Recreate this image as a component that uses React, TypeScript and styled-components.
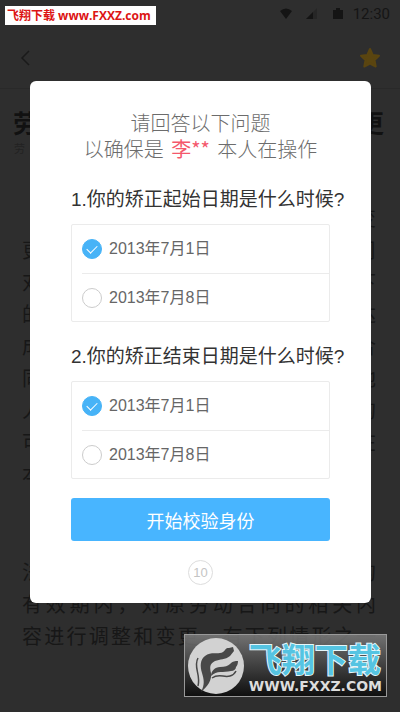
import React, { useState } from "react";
import styled, { createGlobalStyle } from "styled-components";

const cjk = `"Noto Sans CJK SC", sans-serif`;

const GlobalStyle = createGlobalStyle`
  *, *::before, *::after { box-sizing: border-box; }
  html, body, #root { height: 100%; }
  body {
    margin: 0;
    background: #2e2e2e;
    color: #171717;
    font-family: "Liberation Sans", ${cjk};
  }
`;

const Screen = styled.div`
  position: relative;
  min-height: 100%;
  overflow: hidden;
`;

const StatusBar = styled.header`
  display: flex;
  justify-content: flex-end;
  align-items: center;
  gap: 7px;
  height: 28px;
  padding-right: 10px;
  color: #141414;
`;

const Clock = styled.time`
  font: 400 15px/28px Roboto, sans-serif;
  color: #151515;
`;

const NavBar = styled.nav`
  display: flex;
  justify-content: space-between;
  align-items: center;
  height: 61px;
  padding: 0 18px;
  border-bottom: 1px solid #292929;
`;

const IconButton = styled.button`
  display: flex;
  padding: 0;
  border: 0;
  background: none;
`;

const Article = styled.article`
  padding: 15px 16px 0 22px;
`;

const Title = styled.h1`
  display: flex;
  justify-content: space-between;
  margin: 0 0 0 -9px;
  font: 700 25px/36px ${cjk};
  color: #111;
`;

const Meta = styled.p`
  margin: 0 0 46px -8px;
  font: 400 11px/16px ${cjk};
  color: #222;
`;

const Paragraph = styled.p`
  margin: 0 0 66px;
  padding-right: 8px;
  font: 400 20px/32px ${cjk};

  &:last-child {
    margin-bottom: 0;
  }
`;

const Justified = styled.span`
  display: block;
  text-align-last: justify;
  white-space: nowrap;
`;

const Ends = styled.span`
  display: flex;
  justify-content: space-between;
`;

const Overlay = styled.div`
  position: absolute;
  inset: 0;
  display: flex;
  align-items: flex-start;
  padding: 81px 29px 0 30px;
`;

const Dialog = styled.form`
  flex: 1;
  min-width: 0;
  display: flex;
  flex-direction: column;
  padding: 29px 41px 18px;
  border-radius: 6px;
  background: #fff;
`;

const Prompt = styled.h2`
  margin: 0 -16px 22px;
  font: 300 20px/26px ${cjk};
  color: #6c6c6c;
  text-align: center;
  white-space: nowrap;
`;

const Name = styled.strong`
  margin: 0 3px;
  font-weight: 400;
  color: #f4586c;
`;

const Question = styled.fieldset`
  min-width: 0;
  margin: 0 0 19px;
  padding: 0;
  border: 0;
`;

const Legend = styled.legend`
  width: 100%;
  padding: 0;
  margin-bottom: 8px;
  font-size: 19px;
  line-height: 32px;
  white-space: nowrap;
  color: #333;
`;

const Options = styled.div`
  padding-left: 10px;
  border: 1px solid #ebebeb;
  border-radius: 2px;
`;

const Option = styled.label`
  display: flex;
  align-items: center;
  gap: 7px;
  height: 48px;
  font-size: 16px;
  line-height: 20px;
  color: #666;

  & + & {
    border-top: 1px solid #ebebeb;
  }
`;

const Radio = styled.input`
  appearance: none;
  display: grid;
  justify-content: center;
  width: 20px;
  height: 20px;
  margin: 0;
  border: 1px solid #ccc;
  border-radius: 50%;

  &:checked {
    border-color: #47b3f7;
    background: #47b3f7;
  }

  &:checked::after {
    content: "";
    width: 10px;
    height: 6px;
    margin-top: 5px;
    border: solid #fff;
    border-width: 0 0 1px 1px;
    transform: rotate(-45deg);
  }
`;

const Submit = styled.button`
  height: 43px;
  padding: 0;
  border: 0;
  border-radius: 3px;
  background: #48b5ff;
  color: #fff;
  font: 400 18px/40px ${cjk};
`;

const Countdown = styled.output`
  align-self: center;
  width: 25px;
  height: 25px;
  margin-top: 19px;
  border: 1px solid #ddd;
  border-radius: 50%;
  color: #c4c4c4;
  font-size: 13px;
  line-height: 23px;
  text-align: center;
`;

const SiteTag = styled.a`
  position: absolute;
  left: 5px;
  top: 6px;
  padding: 0 5px 0 2px;
  background: #fff;
  color: #dc1414;
  font: 700 12px/19px "Open Sans", ${cjk};
  text-decoration: none;
  white-space: nowrap;
`;

const SiteBadge = styled.a`
  position: absolute;
  right: 13px;
  bottom: 15px;
  display: flex;
  align-items: center;
  gap: 4px;
  height: 63px;
  padding: 0 4px 0 2px;
  border: 1px solid #999;
  background: linear-gradient(rgba(125, 125, 125, 0.85), rgba(12, 12, 12, 0.9));
  text-decoration: none;
  white-space: nowrap;
`;

const BadgeText = styled.span`
  display: flex;
  flex-direction: column;
`;

const BadgeName = styled.span`
  font: 700 33px/40px ${cjk};
  color: #55c4e2;
  -webkit-text-stroke: 2px #e4f6fa;
  paint-order: stroke fill;
`;

const BadgeUrl = styled.span`
  font: 700 14px/16px "DejaVu Sans", sans-serif;
  color: #ddd;
`;

const bodyEnds = [
  ["", "变"],
  ["更", "司"],
  ["对", "下"],
  ["的", "达"],
  ["成", "合"],
  ["同", "他"],
  ["人", "的"],
  ["可", "在"],
  ["本", ""],
];

const rules = ["有效期内，对原劳动合同的相关内", "容进行调整和变更。有下列情形之一"];

const questions = [
  { id: "start", text: "1.你的矫正起始日期是什么时候?" },
  { id: "end", text: "2.你的矫正结束日期是什么时候?" },
];

const dates = ["2013年7月1日", "2013年7月8日"];

function StatusIcons() {
  return (
    <svg width="66" height="14" viewBox="0 0 66 14" fill="currentColor" aria-hidden="true">
      <path d="M0 4Q6-1 12 4L6 12Z" />
      <path d="M37 1V12H26Z" opacity=".3" />
      <path d="M33 5V12H26Z" />
      <path d="M53 3H56V1H60V3H63V12H53Z" />
    </svg>
  );
}

function BadgeLogo() {
  return (
    <svg width="58" height="58" viewBox="0 0 58 58" fill="#484848" aria-hidden="true">
      <circle cx="29" cy="29" r="28" fill="#d2d2d2" />
      <path d="M14 55C18 47 17 43 15 36C13 29 13 23 18 19C24 14 31 18 36 15C39 13 38 11 42 11L46 10L47 14L43 19C38 23 33 22 28 24C22 27 23 31 24 36C25 43 21 49 14 55Z" />
      <path d="M24 39C24 34 28 30 33 30C38 30 41 29 43 27C46 24 48 24 51 24C51 27 50 29 49 30C49 32 47 34 44 34C36 36 30 33 24 39Z" />
      <path
        d="M11 21C6 30 14 37 11 49M25 41C32 36 37 41 43 39C47 38 48 36 49 34"
        fill="none"
        stroke="#484848"
        strokeWidth="1.5"
      />
    </svg>
  );
}

export default function App() {
  const [answers, setAnswers] = useState<Record<string, string>>({ start: dates[0], end: dates[0] });

  return (
    <Screen>
      <GlobalStyle />
      <StatusBar>
        <StatusIcons />
        <Clock>12:30</Clock>
      </StatusBar>
      <NavBar>
        <IconButton type="button" aria-label="返回">
          <svg width="14" height="18" viewBox="0 0 14 18" fill="none" stroke="#1a1a1a" strokeWidth="1.5">
            <path d="M11 2L4 9L11 16" />
          </svg>
        </IconButton>
        <IconButton type="button" aria-label="收藏">
          <svg
            width="24"
            height="24"
            viewBox="0 0 24 24"
            fill="#5a4510"
            stroke="#5a4510"
            strokeWidth="2"
            strokeLinejoin="round"
          >
            <path d="M12 3L14.700 9L21 9.700L16.500 14L17.700 20.500L12 17.500L6.300 20.500L7.500 14L3 9.700L9.300 9Z" />
          </svg>
        </IconButton>
      </NavBar>
      <Article>
        <Title>
          <span>劳</span>
          <span>更</span>
        </Title>
        <Meta>劳</Meta>
        <Paragraph>
          {bodyEnds.map(([first, last]) => (
            <Ends key={first + last}>
              <span>{first}</span>
              <span>{last}</span>
            </Ends>
          ))}
        </Paragraph>
        <Paragraph>
          <Ends>
            <span>法</span>
            <span>的</span>
          </Ends>
          {rules.map((line) => (
            <Justified key={line}>{line}</Justified>
          ))}
        </Paragraph>
      </Article>
      <Overlay>
        <Dialog role="dialog" aria-label="身份校验" onSubmit={(e) => e.preventDefault()}>
          <Prompt>
            请回答以下问题
            <br />
            以确保是 <Name>李**</Name> 本人在操作
          </Prompt>
          {questions.map((q) => (
            <Question key={q.id}>
              <Legend>{q.text}</Legend>
              <Options>
                {dates.map((date) => (
                  <Option key={date}>
                    <Radio
                      type="radio"
                      name={q.id}
                      value={date}
                      checked={answers[q.id] === date}
                      onChange={() => setAnswers({ ...answers, [q.id]: date })}
                    />
                    {date}
                  </Option>
                ))}
              </Options>
            </Question>
          ))}
          <Submit type="submit">开始校验身份</Submit>
          <Countdown>10</Countdown>
        </Dialog>
      </Overlay>
      <SiteTag href="#">飞翔下载 www.FXXZ.com</SiteTag>
      <SiteBadge href="#">
        <BadgeLogo />
        <BadgeText>
          <BadgeName>飞翔下载</BadgeName>
          <BadgeUrl>WWW.FXXZ.COM</BadgeUrl>
        </BadgeText>
      </SiteBadge>
    </Screen>
  );
}
